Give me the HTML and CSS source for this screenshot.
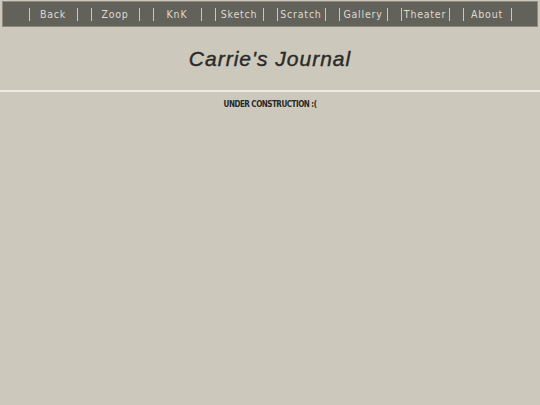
FILE: index.html
```html
<!DOCTYPE html>
<html>
<head>
<meta charset="utf-8">
<link rel="stylesheet" href="styles.css">
</head>
<body>
<nav class="nav">
  <ul class="nav-list">
    <li class="nav-item">Back</li>
    <li class="nav-item">Zoop</li>
    <li class="nav-item">KnK</li>
    <li class="nav-item">Sketch</li>
    <li class="nav-item">Scratch</li>
    <li class="nav-item">Gallery</li>
    <li class="nav-item">Theater</li>
    <li class="nav-item">About</li>
  </ul>
</nav>
<header class="header">
  <h1 class="title">Carrie's Journal</h1>
</header>
<hr class="rule">
<p class="notice">UNDER CONSTRUCTION :(</p>
</body>
</html>
```
FILE: styles.css
```css
html, body {
  margin: 0;
  padding: 0;
  background: #ccc8bc;
}
body {
  font-family: "DejaVu Sans", sans-serif;
}
.nav {
  margin: 1px 2px 0 2px;
  height: 24px;
  background: #62615a;
  border: 1px solid #8d8b83;
  display: flex;
  align-items: center;
  justify-content: center;
}
.nav-list {
  list-style: none;
  margin: 0;
  padding: 0;
  display: flex;
  gap: 13px;
}
.nav-item {
  width: 47px;
  height: 13px;
  line-height: 13px;
  border-left: 1px solid #c9c6bb;
  border-right: 1px solid #c9c6bb;
  color: #dedad0;
  font-family: "DejaVu Sans Condensed", "DejaVu Sans", sans-serif;
  font-stretch: condensed;
  font-size: 10.5px;
  letter-spacing: 0.8px;
  text-align: center;
  white-space: nowrap;
}
.header {
  height: 63px;
  display: flex;
  align-items: center;
  justify-content: center;
}
.title {
  margin: 0;
  font-family: "Liberation Sans", sans-serif;
  font-style: italic;
  font-weight: normal;
  font-size: 21px;
  letter-spacing: 1px;
  color: #2a2a28;
  -webkit-text-stroke: 0.4px #2a2a28;
}
.rule {
  margin: 0;
  border: 0;
  height: 2px;
  background: #eeebe3;
}
.notice {
  margin: 8px 0 0 0;
  text-align: center;
  font-family: "DejaVu Sans Condensed", "DejaVu Sans", sans-serif;
  font-stretch: condensed;
  font-weight: bold;
  font-size: 8px;
  letter-spacing: -0.5px;
  color: #2a2a28;
}
```
